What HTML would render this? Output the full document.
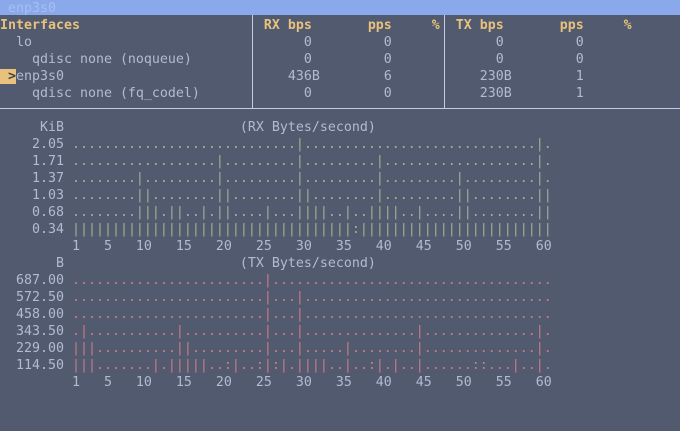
<!DOCTYPE html>
<html><head><meta charset="utf-8"><style>
html,body{margin:0;padding:0;width:680px;height:431px;overflow:hidden;background:#525a6f;}
#t{position:absolute;left:0;top:0;width:680px;height:15px;background:#8aa9eb;}
pre{margin:0;position:absolute;left:0;font-family:"DejaVu Sans Mono","Liberation Mono",monospace;font-size:13.29px;line-height:17px;color:#b3bbd2;white-space:pre;}
.h{color:#e8c27c;font-weight:bold;}
.g{color:#9db38f;}
.r{color:#c97b86;}
.sel{background:#e8c27c;color:#3b3f4c;font-weight:bold;}
.v{position:absolute;width:1px;background:#c3cbe6;top:15px;height:94px;}
</style></head><body>
<div id="t"></div>
<pre style="top:0px;color:#a8bff3"> enp3s0</pre>
<div class="v" style="left:252px"></div>
<div class="v" style="left:444px"></div>
<div style="position:absolute;left:0;top:108px;width:680px;height:1px;background:#c3cbe6"></div>
<pre style="top:17px"><span class="h">Interfaces                       RX bps       pps     %  TX bps       pps     %</span>
  lo                                  0         0             0         0
    qdisc none (noqueue)              0         0             0         0
<span class="sel"> &gt;</span>enp3s0                            436B        6           230B        1
    qdisc none (fq_codel)             0         0           230B        1</pre>
<pre style="top:119px">     KiB                      (RX Bytes/second)
    2.05 <span class="g">............................|.............................|.</span>
    1.71 <span class="g">..................|.........|.........|...................|.</span>
    1.37 <span class="g">........|.........|.........|.........|.........|.........|.</span>
    1.03 <span class="g">........||........||........||........|.........||........||</span>
    0.68 <span class="g">........|||.||..|.||....|...||||..|..||||..|....||........||</span>
    0.34 <span class="g">|||||||||||||||||||||||||||||||||||:||||||||||||||||||||||||</span>
         1   5   10   15   20   25   30   35   40   45   50   55   60
       B                      (TX Bytes/second)
  687.00 <span class="r">........................|...................................</span>
  572.50 <span class="r">........................|...|...............................</span>
  458.00 <span class="r">........................|...|...............................</span>
  343.50 <span class="r">.|...........|..........|...|..............|..............|.</span>
  229.00 <span class="r">|||..........||.........|...|.....|........|..............|.</span>
  114.50 <span class="r">|||.......|.|||||..:|..:|:|.||||..|..:|.|..|......::...|..|.</span>
         1   5   10   15   20   25   30   35   40   45   50   55   60</pre>
</body></html>
